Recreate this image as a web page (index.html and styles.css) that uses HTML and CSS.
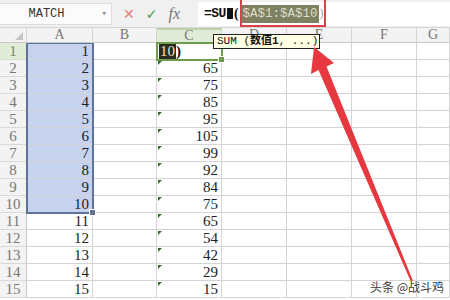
FILE: index.html
```html
<!DOCTYPE html>
<html lang="zh">
<head>
  <meta charset="UTF-8" />
  <title>SUM</title>
  <link rel="stylesheet" href="styles.css">
</head>
<body>

<div class="toolbar">
  <div class="namebox">MATCH<span class="drop">▾</span></div>
  <div class="tool-icons">
    <span class="ic-x">✕</span>
    <span class="ic-ok">✓</span>
    <span class="ic-fx">fx</span>
  </div>
  <div class="formula">
    <span class="f-bold">=SU</span><span class="caret"></span><span class="f-paren">(</span><span class="f-range">$A$1:$A$10</span><span class="f-end">)</span>
  </div>
</div>

<div class="sheet" id="sheet">
  <div class="hd corner"><span class="tri"></span></div>
  <div class="hd">A</div>
  <div class="hd">B</div>
  <div class="hd hd-on">C</div>
  <div class="hd">D</div>
  <div class="hd">E</div>
  <div class="hd">F</div>
  <div class="hd">G</div>

  <div class="sel-box"><span class="handle blue"></span></div>
  <div class="act-box"><span class="handle green"></span></div>
</div>

<div class="redbox"></div>

<div class="tip">SUM (<b>数值1</b>, ...)</div>

<svg class="arrow" width="450" height="300" viewBox="0 0 450 300">
  <polygon points="314,47 334,63 326.5,66.5 413,281 411,282 318.5,70 311,74" fill="#e5393f" />
</svg>

<div class="mark">头条 @战斗鸡</div>

<script>
  const colC = [null, 65, 75, 85, 95, 105, 99, 92, 84, 75, 65, 54, 42, 29, 15];
  const sheet = document.getElementById('sheet');
  const box = sheet.querySelector('.sel-box');

  for (let r = 1; r <= 15; r++) {
    const row = [];
    row.push(`<div class="rh${r === 1 ? ' rh-on' : ''}">${r}</div>`);
    row.push(`<div class="c num${r <= 10 ? ' sel' : ''}">${r}</div>`);
    row.push(`<div class="c"></div>`);
    if (r === 1) {
      row.push(`<div class="c edit"><span class="hl">10</span>)</div>`);
    } else {
      row.push(`<div class="c num"><span class="flag"></span>${colC[r - 1]}</div>`);
    }
    for (let i = 0; i < 4; i++) row.push(`<div class="c"></div>`);
    box.insertAdjacentHTML('beforebegin', row.join(''));
  }
</script>

</body>
</html>
```

FILE: styles.css
```css
body { margin: 0; width: 450px; height: 300px; overflow: hidden; background: #fff; position: relative; font-family: "Liberation Serif", serif; }

.toolbar { height: 28px; display: flex; align-items: center; background: #f0f0f0; border-bottom: 1px solid #d6d6d6; box-sizing: border-box; }
.namebox { width: 112px; height: 22px; box-sizing: border-box; background: #fbfbfb; border: 1px solid #dcdcdc; border-left: none; display: flex; align-items: center; justify-content: center; position: relative; font-family: "Liberation Mono", monospace; font-size: 12px; color: #333; padding-right: 18px; }
.drop { position: absolute; right: 4px; font-size: 9px; color: #888; }
.tool-icons { width: 86px; display: flex; align-items: center; gap: 11px; padding-left: 11px; box-sizing: border-box; }
.ic-x { color: #e77a7a; font-family: "DejaVu Sans", sans-serif; font-size: 14px; }
.ic-ok { color: #4f9e52; font-family: "DejaVu Sans", sans-serif; font-size: 14px; }
.ic-fx { color: #777; font-style: italic; font-size: 16px; }
.formula { flex: 1; height: 24px; background: #fff; display: flex; align-items: center; padding-left: 6px; font-size: 14px; }
.f-bold { font-weight: bold; font-family: "Liberation Mono", monospace; font-size: 13px; color: #111; letter-spacing: -0.5px; }
.caret { display: inline-block; width: 6px; height: 11px; background: #111; margin-left: 1px; }
.f-paren { font-weight: bold; font-size: 14px; color: #111; margin: 0 1px; }
.f-range { font-family: "Liberation Mono", monospace; font-size: 12.5px; background: #7e8062; color: #dcdcc6; padding: 2px 1px; margin-left: 2px; }
.f-end { font-size: 12px; color: #999; margin-left: 1px; }

.sheet { display: grid; grid-template-columns: 27px 66px 64px 65px 65px 65px 65px 1fr; grid-template-rows: 15px repeat(15, 17px); position: relative; font-size: 15px; }
.hd { background: #f3f3f3; border-right: 1px solid #d4d4d4; border-bottom: 1px solid #c8c8c8; box-sizing: border-box; text-align: center; color: #777; font-size: 14px; line-height: 14px; }
.hd-on { background: #e2ebd7; border-top: 2px solid #bcd3a6; line-height: 12px; }
.corner { position: relative; }
.tri { position: absolute; right: 3px; bottom: 2px; border-left: 8px solid transparent; border-bottom: 8px solid #c6c6c6; }
.rh { background: #f3f3f3; border-right: 1px solid #c8c8c8; border-bottom: 1px solid #dadada; box-sizing: border-box; text-align: center; color: #777; line-height: 17px; }
.rh-on { background: #e2ebd7; color: #6f8a5f; }
.c { border-right: 1px solid #d4d4d4; border-bottom: 1px solid #d4d4d4; box-sizing: border-box; line-height: 17px; position: relative; color: #222; }
.num { text-align: right; padding-right: 3px; }
.sel { background: #c7d3ee; }
.flag { position: absolute; left: 1px; top: 1px; border-top: 4px solid #2f6e23; border-right: 4px solid transparent; }
.edit { padding-left: 2px; font-weight: bold; color: #111; }
.hl { background: #2a2a20; color: #e8e4c8; font-weight: normal; padding: 0 1px; }

.sel-box { position: absolute; left: 26px; top: 15px; width: 68px; height: 171px; box-sizing: border-box; border: 2px solid #5f7398; border-top-width: 1px; }
.act-box { position: absolute; left: 156px; top: 14px; width: 67px; height: 19px; box-sizing: border-box; border: 2px solid #6c9c4c; }
.handle { position: absolute; right: -4px; bottom: -4px; width: 5px; height: 5px; border: 1px solid #fff; }
.handle.blue { background: #5f7398; }
.handle.green { background: #6c9c4c; }

.redbox { position: absolute; left: 240px; top: -2px; width: 86px; height: 29px; box-sizing: border-box; border: 2px solid #d94048; }
.tip { position: absolute; left: 213px; top: 34px; height: 15px; width: 107px; box-sizing: border-box; background: #ffffe4; border: 1px solid #222; font-family: "Liberation Mono", "Noto Sans CJK SC", monospace; font-size: 11px; line-height: 13px; padding-left: 3px; color: #111; white-space: nowrap; }
.tip b { font-weight: bold; }
.arrow { position: absolute; left: 0; top: 0; }
.mark { position: absolute; left: 370px; top: 278px; font-family: "Noto Sans CJK SC", sans-serif; font-size: 12px; color: #3a3a3a; text-shadow: 0 0 2px #fff, 0 0 2px #fff; }
```
